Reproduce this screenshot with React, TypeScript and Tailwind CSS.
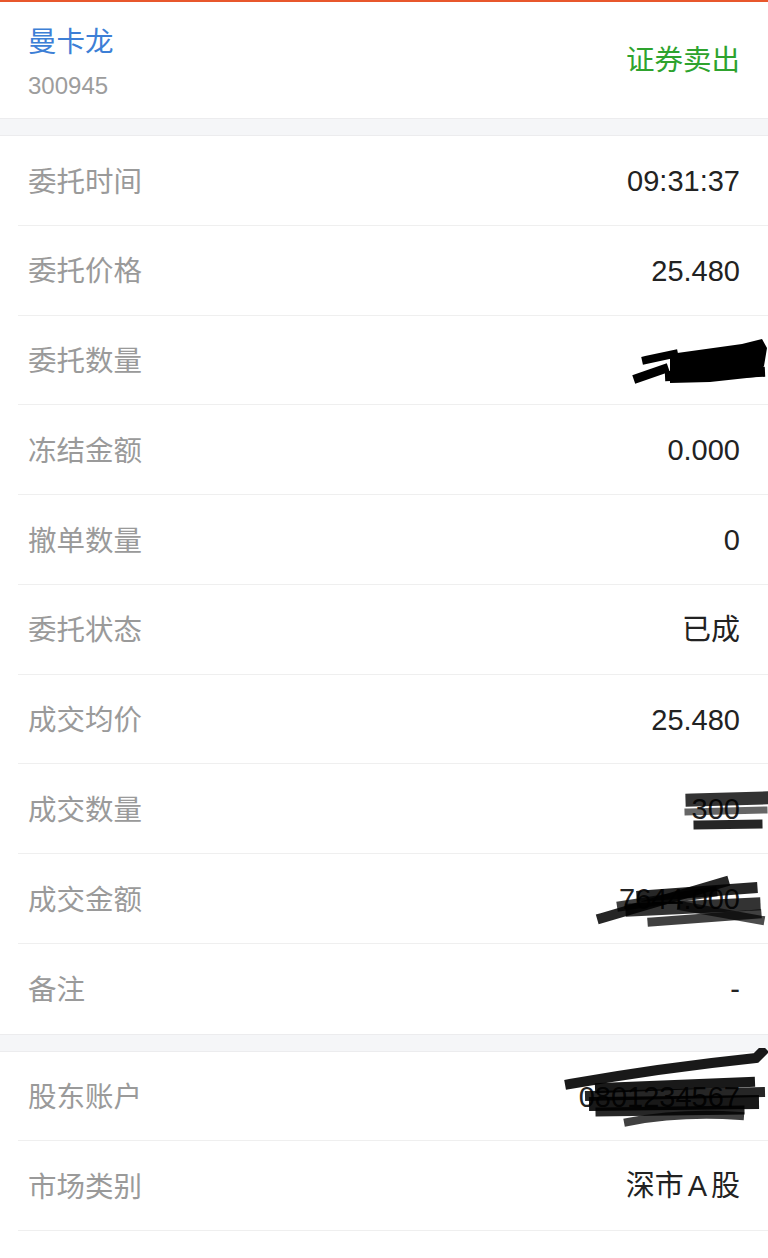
import React from 'react';

type Row = { label: string; value: React.ReactNode; mark?: React.ReactNode };

const font = { fontFamily: '"Liberation Sans", "Noto Sans CJK SC", sans-serif' };

// marker scribbles over redacted values (local coords, svg sits at given page box)
const Scribble = ({ left, top, w, h, children }: { left: number; top: number; w: number; h: number; children: React.ReactNode }) => (
  <svg
    className="absolute pointer-events-none"
    style={{ left, top }}
    width={w}
    height={h}
    viewBox={`0 0 ${w} ${h}`}
    fill="none"
    strokeLinecap="square"
  >
    {children}
  </svg>
);

const qtyMark = (
  <Scribble left={630} top={10} w={138} h={62}>
    <path d="M8 52 L34 43" stroke="#000" strokeWidth="9" />
    <path d="M16 34 L44 28" stroke="#000" strokeWidth="8" />
    <path d="M40 28 L112 18 L132 13 L137 22 L134 40 L126 51 L80 56 L40 57 Z" fill="#000" />
    <path d="M40 50 L130 46" stroke="#000" strokeWidth="10" />
  </Scribble>
);

const dealQtyMark = (
  <Scribble left={680} top={24} w={88} h={46}>
    <path d="M12 12 L82 10" stroke="#000" strokeOpacity="0.8" strokeWidth="13" />
    <path d="M8 24 L84 22" stroke="#000" strokeOpacity="0.6" strokeWidth="7" />
    <path d="M18 37 L78 36" stroke="#000" strokeOpacity="0.85" strokeWidth="9" />
  </Scribble>
);

const dealAmtMark = (
  <Scribble left={592} top={8} w={176} h={70}>
    <path d="M10 56 L132 20" stroke="#000" strokeOpacity="0.85" strokeWidth="10" />
    <path d="M50 34 L160 26" stroke="#000" strokeOpacity="0.85" strokeWidth="11" />
    <path d="M40 48 L162 42" stroke="#000" strokeOpacity="0.8" strokeWidth="13" />
    <path d="M30 44 L120 30" stroke="#000" strokeOpacity="0.75" strokeWidth="10" />
    <path d="M60 60 L165 52" stroke="#000" strokeOpacity="0.75" strokeWidth="9" />
    <path d="M90 44 L168 58" stroke="#000" strokeOpacity="0.7" strokeWidth="9" />
  </Scribble>
);

const acctMark = (
  <Scribble left={560} top={-4} w={208} h={82}>
    <path d="M10 36 Q100 20 196 10 L202 4" stroke="#000" strokeOpacity="0.9" strokeWidth="10" />
    <path d="M40 40 L190 34" stroke="#000" strokeOpacity="0.9" strokeWidth="10" />
    <path d="M30 48 L200 44" stroke="#000" strokeOpacity="0.85" strokeWidth="10" />
    <path d="M36 56 L192 54" stroke="#000" strokeOpacity="0.9" strokeWidth="14" />
    <path d="M40 64 L180 62" stroke="#000" strokeOpacity="0.85" strokeWidth="9" />
    <path d="M68 74 Q120 64 180 68" stroke="#000" strokeOpacity="0.75" strokeWidth="8" />
  </Scribble>
);

const group1: Row[] = [
  { label: '委托时间', value: '09:31:37' },
  { label: '委托价格', value: '25.480' },
  { label: '委托数量', value: '300', mark: qtyMark },
  { label: '冻结金额', value: '0.000' },
  { label: '撤单数量', value: '0' },
  { label: '委托状态', value: '已成' },
  { label: '成交均价', value: '25.480' },
  { label: '成交数量', value: '300', mark: dealQtyMark },
  { label: '成交金额', value: '7644.000', mark: dealAmtMark },
  { label: '备注', value: '-' },
];

const group2: Row[] = [
  { label: '股东账户', value: '0801234567', mark: acctMark },
  {
    label: '市场类别',
    value: (
      <>
        深市<span className="px-[4px]">A</span>股
      </>
    ),
  },
];

const Band = () => (
  <div className="h-[18px] bg-[#f5f6f8] border-y border-[#ececee]" />
);

const InfoRow = ({ row, last }: { row: Row; last: boolean }) => (
  <div className="relative h-[89.75px] pl-[18px]">
    <div
      className={`h-full flex items-center justify-between pl-[10px] pr-[28px] pt-[3px] ${
        last ? '' : 'border-b border-[#efefef]'
      }`}
    >
      <span className="text-[28.5px] text-[#9a9a9a]">{row.label}</span>
      <span className="text-[29px] text-[#222]">{row.value}</span>
    </div>
    {row.mark}
  </div>
);

export default function App() {
  return (
    <div className="w-[768px] min-h-[1258px] bg-white overflow-hidden" style={font}>
      <div className="h-[2px] bg-[#e8572c]" />
      <div className="h-[116px] flex items-start justify-between pl-[28px] pr-[28px]">
        <div className="flex flex-col pt-[23px]">
          <span className="text-[28.5px] leading-[34px] text-[#3d7fd6]">曼卡龙</span>
          <span className="text-[24px] leading-[28px] text-[#9d9d9d] mt-[13px]">300945</span>
        </div>
        <span className="text-[28.5px] leading-[34px] text-[#2ea32e] pt-[41px]">证券卖出</span>
      </div>
      <Band />
      {group1.map((r, i) => (
        <InfoRow key={r.label} row={r} last={i === group1.length - 1} />
      ))}
      <Band />
      {group2.map((r) => (
        <InfoRow key={r.label} row={r} last={false} />
      ))}
    </div>
  );
}
